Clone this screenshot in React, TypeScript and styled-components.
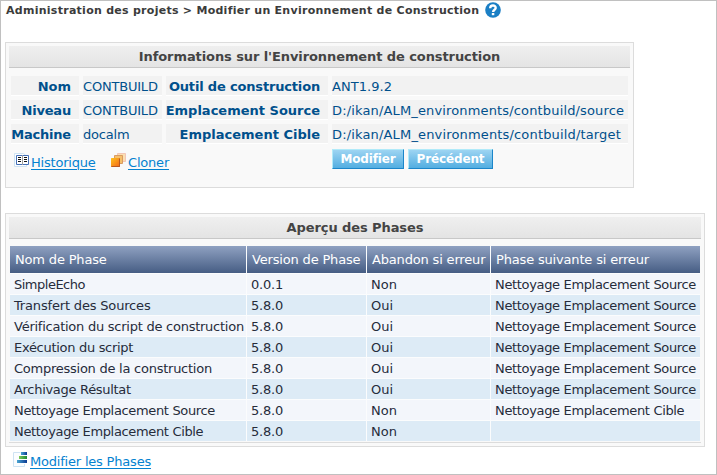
import React from "react";
import styled, { createGlobalStyle } from "styled-components";

const GlobalStyle = createGlobalStyle`
  * { box-sizing: border-box; }
  body {
    margin: 0;
    background: #fff;
    font-family: Verdana, "DejaVu Sans", sans-serif;
    font-size: 13px;
  }
`;

const Page = styled.main`
  width: 717px;
  height: 475px;
  border: 1px solid #c0c0c0;
  padding-left: 4px;
  overflow: hidden;
  white-space: nowrap;
`;

const Breadcrumb = styled.header`
  display: flex;
  align-items: center;
  gap: 6px;
  height: 18px;
  margin-bottom: 23px;
  padding-left: 1px;
  color: #3b3b3b;
`;

const Crumbs = styled.h1`
  margin: 0;
  width: 473px;
  font-size: 11px;
  font-weight: bold;
  line-height: 19px;
  letter-spacing: 0.27px;
`;

const Panel = styled.section<{ $width: number; $height: number }>`
  width: ${(p) => p.$width}px;
  height: ${(p) => p.$height}px;
  padding: 3px;
  border: 1px solid #dcdcdc;
  background: #f9f9f9;
`;

const PanelTitle = styled.h2`
  margin: 0;
  height: 22px;
  border-bottom: 1px solid #c8c8c8;
  background: linear-gradient(#efefef, #e4e4e4);
  color: #444;
  font-size: 13px;
  line-height: 22px;
  letter-spacing: -0.09px;
  text-align: center;
`;

const InfoGrid = styled.div`
  display: grid;
  grid-template-columns: 68px 79px 162px 296px;
  grid-auto-rows: 20px;
  gap: 4px;
  margin: 8px 2px 0;
`;

const InfoCell = styled.div<{ $spacing?: number }>`
  border-bottom: 1px solid #fff;
  background: #f2f2f2;
  color: #00508c;
  line-height: 21px;
  letter-spacing: ${(p) => p.$spacing ?? 0}px;
`;

const InfoLabel = styled(InfoCell)`
  display: flex;
  justify-content: flex-end;
  padding-right: 8px;
  font-weight: bold;
`;

const Actions = styled.div`
  display: flex;
  align-items: flex-start;
  height: 22px;
  margin-top: 5px;
  padding-left: 5px;
`;

const ActionLink = styled.a<{ $width: number }>`
  display: flex;
  gap: 2px;
  width: ${(p) => p.$width}px;
  height: 22px;
  color: #0482d0;
  line-height: 27px;
  letter-spacing: -0.2px;
  text-decoration: underline;
  text-underline-offset: 2px;
  text-decoration-thickness: 1px;

  svg { flex: none; margin-top: 4px; }
`;

const Buttons = styled.div`
  display: flex;
  gap: 4px;
`;

const Button = styled.button<{ $width: number }>`
  width: ${(p) => p.$width}px;
  height: 20px;
  padding: 0;
  border: 1px solid;
  border-color: #b0eaf9 #1c86ca #1c86ca #b0eaf9;
  background: linear-gradient(#9dd4f2, #53aee1);
  color: #fff;
  font: bold 12px/19px Verdana, "DejaVu Sans", sans-serif;
  letter-spacing: -0.15px;
`;

const PhaseBox = styled.div`
  margin-top: 7px;
  padding: 0 1px 1px;
  border-bottom: 1px solid #dcdcdc;
`;

const PhaseTable = styled.div`
  display: grid;
  grid-template-columns: 236px 119px 123px 209px;
  grid-template-rows: 27px;
  grid-auto-rows: 20px;
  gap: 1px;
  background: #fbfcfd;
`;

const HeadCell = styled.div`
  padding-left: 5px;
  background: linear-gradient(#8fa1c1, #465d84);
  color: #fff;
  line-height: 28px;
  letter-spacing: -0.17px;
`;

const BodyCell = styled.div<{ $striped: boolean; $spacing: number }>`
  padding-left: 4px;
  background: ${(p) => (p.$striped ? "#ddebf6" : "#f3f6fb")};
  color: #262c3b;
  line-height: 21px;
  letter-spacing: ${(p) => p.$spacing}px;
`;

const Gap = styled.div`
  height: 25px;
`;

const Footer = styled.footer`
  padding: 1px 8px 0;
`;

const HelpIcon = () => (
  <svg width="16" height="16" viewBox="0 0 16 16">
    <circle cx="8" cy="8" r="7.8" fill="#1b7fc5" />
    <path d="M5.2 6.2C5.2 2.7 10.8 2.7 10.7 6.1C10.7 7.8 8.1 7.8 8.1 10" fill="none" stroke="#fff" strokeWidth="2.4" />
    <rect x="6.8" y="11" width="2.5" height="2.2" fill="#fff" />
  </svg>
);

const HistoryIcon = () => (
  <svg width="15" height="14" viewBox="0 0 15 14">
    <path d="M.5.5H9.5L12.5 3V13.5H.5Z" fill="#fbfdff" stroke="#cee3f3" />
    <path d="M2.5 2.5H14.5V11.5H2.5Z" fill="#fff" stroke="#4570b8" />
    <path d="M8 2H9V12H8Z" fill="#a0a0a0" />
    <path d="M4 4.5H7M4 6.5H7M4 8.5H7M10 4.5H13M10 6.5H13M10 8.5H13" stroke="#111" />
  </svg>
);

const CloneIcon = () => (
  <svg width="15" height="15" viewBox="0 0 15 15">
    <defs>
      <linearGradient id="cloneFill" x1="0" y1="0" x2="1" y2="1">
        <stop stopColor="#ffc41d" />
        <stop offset="1" stopColor="#f26318" />
      </linearGradient>
    </defs>
    <g transform="translate(0 -1)">
      <path d="M6.5 1.5H14.5V9.5H6.5Z" fill="#f9dfb2" stroke="#f3c6b5" />
      <path d="M3.5 3.5H11.5V11.5H3.5Z" fill="#f5c06b" stroke="#d99a62" />
      <rect y="6" width="9" height="9" rx=".5" fill="url(#cloneFill)" />
      <path d="M.5 14.5H8.5V6.5" fill="none" stroke="#b75822" />
    </g>
  </svg>
);

const PhasesIcon = () => (
  <svg width="15" height="15" viewBox="0 0 15 15">
    <defs>
      <linearGradient id="barBlue">
        <stop stopColor="#4aa6d2" />
        <stop offset="1" stopColor="#0b3992" />
      </linearGradient>
      <linearGradient id="barGreen">
        <stop stopColor="#7bc957" />
        <stop offset="1" stopColor="#218b35" />
      </linearGradient>
    </defs>
    <path d="M7.5.5H.5V14.5H11.5V12" fill="#fbfdff" stroke="#cee3f3" />
    <rect x="8" width="6" height="3" fill="url(#barBlue)" />
    <rect x="6" y="4" width="8" height="3" fill="url(#barGreen)" />
    <rect x="4" y="8" width="10" height="3" fill="url(#barBlue)" />
  </svg>
);

const environment = [
  { label: "Nom", value: "CONTBUILD", detail: "Outil de construction", detailValue: "ANT1.9.2", spacing: [0, -0.2, -0.17, 0.05] },
  { label: "Niveau", value: "CONTBUILD", detail: "Emplacement Source", detailValue: "D:/ikan/ALM_environments/contbuild/source", spacing: [-0.2, -0.2, 0, 0.15] },
  { label: "Machine", value: "docalm", detail: "Emplacement Cible", detailValue: "D:/ikan/ALM_environments/contbuild/target", spacing: [-0.2, -0.2, 0, 0.16] },
];

const headings = ["Nom de Phase", "Version de Phase", "Abandon si erreur", "Phase suivante si erreur"];

const SOURCE = "Nettoyage Emplacement Source";
const TARGET = "Nettoyage Emplacement Cible";

const phases = [
  { cells: ["SimpleEcho", "0.0.1", "Non", SOURCE], spacing: -0.5 },
  { cells: ["Transfert des Sources", "5.8.0", "Oui", SOURCE], spacing: -0.17 },
  { cells: ["Vérification du script de construction", "5.8.0", "Oui", SOURCE], spacing: -0.25 },
  { cells: ["Exécution du script", "5.8.0", "Oui", SOURCE], spacing: -0.3 },
  { cells: ["Compression de la construction", "5.8.0", "Oui", SOURCE], spacing: -0.25 },
  { cells: ["Archivage Résultat", "5.8.0", "Oui", SOURCE], spacing: -0.3 },
  { cells: [SOURCE, "5.8.0", "Non", TARGET], spacing: -0.34 },
  { cells: [TARGET, "5.8.0", "Non", ""], spacing: -0.34 },
];

const columnSpacing = [0, -0.2, 0, -0.34];

export default function App() {
  return (
    <>
      <GlobalStyle />
      <Page>
        <Breadcrumb>
          <Crumbs>Administration des projets &gt; Modifier un Environnement de Construction</Crumbs>
          <HelpIcon />
        </Breadcrumb>

        <Panel $width={629} $height={146}>
          <PanelTitle>Informations sur l'Environnement de construction</PanelTitle>
          <InfoGrid>
            {environment.map(({ label, value, detail, detailValue, spacing }) => (
              <React.Fragment key={label}>
                <InfoLabel $spacing={spacing[0]}>{label}</InfoLabel>
                <InfoCell $spacing={spacing[1]}>{value}</InfoCell>
                <InfoLabel $spacing={spacing[2]}>{detail}</InfoLabel>
                <InfoCell $spacing={spacing[3]}>{detailValue}</InfoCell>
              </React.Fragment>
            ))}
          </InfoGrid>
          <Actions>
            <ActionLink $width={97}><HistoryIcon />Historique</ActionLink>
            <ActionLink $width={221}><CloneIcon />Cloner</ActionLink>
            <Buttons>
              <Button $width={72}>Modifier</Button>
              <Button $width={85}>Précédent</Button>
            </Buttons>
          </Actions>
        </Panel>

        <Gap />

        <Panel $width={700} $height={234}>
          <PanelTitle>Aperçu des Phases</PanelTitle>
          <PhaseBox>
            <PhaseTable>
              {headings.map((heading) => <HeadCell key={heading}>{heading}</HeadCell>)}
              {phases.map((phase, row) =>
                phase.cells.map((value, column) => (
                  <BodyCell
                    key={`${row}-${column}`}
                    $striped={row % 2 === 1}
                    $spacing={column === 0 ? phase.spacing : columnSpacing[column]}
                  >
                    {value}
                  </BodyCell>
                ))
              )}
            </PhaseTable>
          </PhaseBox>
        </Panel>
        <Footer>
          <ActionLink $width={140}><PhasesIcon />Modifier les Phases</ActionLink>
        </Footer>
      </Page>
    </>
  );
}
